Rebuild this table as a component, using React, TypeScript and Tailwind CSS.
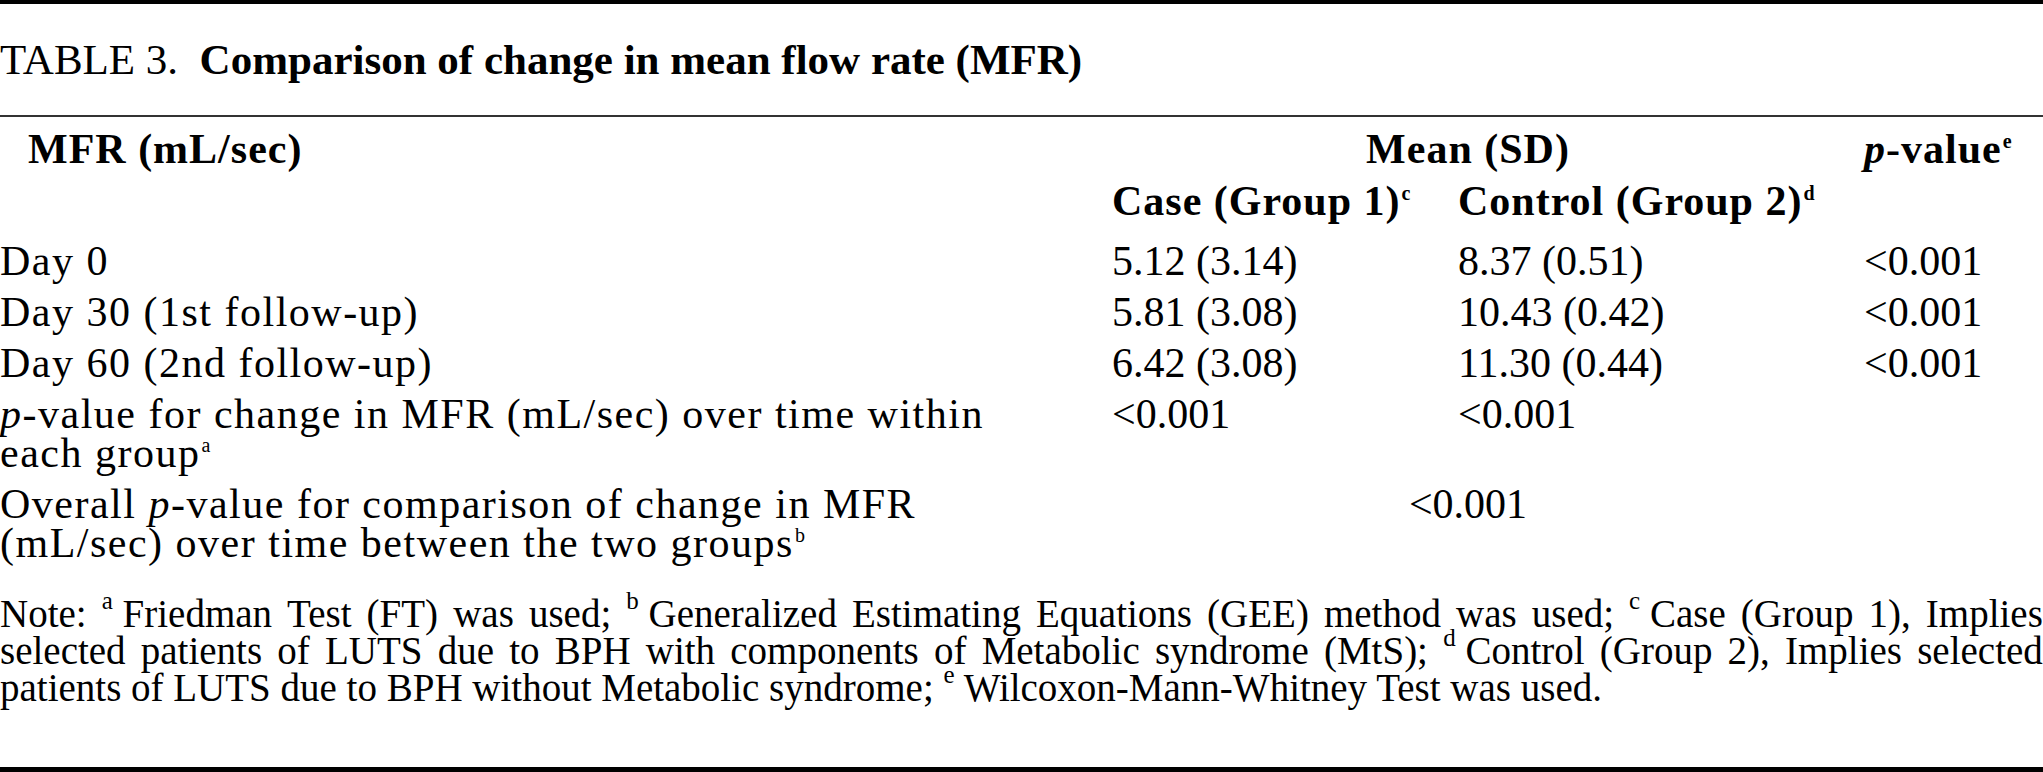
import React from "react"

type Cell = React.ReactNode

function Sup({ children }: { children: React.ReactNode }) {
  return <sup className="text-[20px] relative top-[-15px] align-baseline ml-[1px] tracking-normal">{children}</sup>
}

function NoteSup({ children }: { children: React.ReactNode }) {
  return <sup className="text-[25px] relative top-[-4px] align-super">{children}</sup>
}

function Row({ cells, className = "" }: { cells: Cell[]; className?: string }) {
  return (
    <div className={`grid grid-cols-[1112px_346px_406px_1fr] ${className}`}>
      {cells.map((c, i) => (
        <div key={i} className={i === 0 ? "tracking-[1.5px]" : ""}>
          {c}
        </div>
      ))}
    </div>
  )
}

const dataRows: Cell[][] = [
  ["Day 0", "5.12 (3.14)", "8.37 (0.51)", "<0.001"],
  ["Day 30 (1st follow-up)", "5.81 (3.08)", "10.43 (0.42)", "<0.001"],
  ["Day 60 (2nd follow-up)", "6.42 (3.08)", "11.30 (0.44)", "<0.001"],
]

export default function App() {
  return (
    <div className="w-[2043px] h-[772px] bg-white text-black font-['Liberation_Serif',serif] text-[42px] leading-[39px] flex flex-col overflow-hidden">
      <div className="h-[4px] bg-black" />

      {/* Caption */}
      <div className="pt-[36px] pb-[36px] text-[43px] whitespace-nowrap">
        TABLE 3.&nbsp; <span className="font-bold">Comparison of change in mean flow rate (MFR)</span>
      </div>
      <div className="h-[2px] bg-[#333]" />

      {/* Header */}
      <div className="pt-[13px] font-bold tracking-[1px]">
        <div className="grid grid-cols-[1112px_752px_1fr]">
          <div className="pl-[28px]">MFR (mL/sec)</div>
          <div className="text-center pr-[40px]">Mean (SD)</div>
          <div>
            <span className="italic">p</span>-value<Sup>e</Sup>
          </div>
        </div>
        <div className="grid grid-cols-[1112px_346px_406px_1fr] mt-[13px]">
          <div />
          <div>Case (Group 1)<Sup>c</Sup></div>
          <div>Control (Group 2)<Sup>d</Sup></div>
          <div />
        </div>
      </div>

      {/* Body */}
      <div className="mt-[21px] flex flex-col gap-[12px]">
        {dataRows.map((r, i) => (
          <Row key={i} cells={r} />
        ))}
        <Row
          cells={[
            <>
              <span className="italic">p</span>-value for change in MFR (mL/sec) over time within
              <br />
              each group<Sup>a</Sup>
            </>,
            "<0.001",
            "<0.001",
            "",
          ]}
        />
        <div className="grid grid-cols-[1112px_752px_1fr]">
          <div className="tracking-[1.5px]">
            Overall <span className="italic">p</span>-value for comparison of change in MFR
            <br />
            (mL/sec) over time between the two groups<Sup>b</Sup>
          </div>
          <div className="text-center pr-[40px]">&lt;0.001</div>
          <div />
        </div>
      </div>

      {/* Notes */}
      <div className="mt-[32px] text-[39px] leading-[37px]">
        <p className="flex justify-between whitespace-nowrap">
          <span>Note:</span>
          <span><NoteSup>a</NoteSup> Friedman</span>
          <span>Test</span>
          <span>(FT)</span>
          <span>was</span>
          <span>used;</span>
          <span><NoteSup>b</NoteSup> Generalized</span>
          <span>Estimating</span>
          <span>Equations</span>
          <span>(GEE)</span>
          <span>method</span>
          <span>was</span>
          <span>used;</span>
          <span><NoteSup>c</NoteSup> Case</span>
          <span>(Group</span>
          <span>1),</span>
          <span>Implies</span>
        </p>
        <p className="flex justify-between whitespace-nowrap">
          <span>selected</span>
          <span>patients</span>
          <span>of</span>
          <span>LUTS</span>
          <span>due</span>
          <span>to</span>
          <span>BPH</span>
          <span>with</span>
          <span>components</span>
          <span>of</span>
          <span>Metabolic</span>
          <span>syndrome</span>
          <span>(MtS);</span>
          <span><NoteSup>d</NoteSup> Control</span>
          <span>(Group</span>
          <span>2),</span>
          <span>Implies</span>
          <span>selected</span>
        </p>
        <p className="whitespace-nowrap">
          patients of LUTS due to BPH without Metabolic syndrome; <NoteSup>e</NoteSup> Wilcoxon-Mann-Whitney Test was used.
        </p>
      </div>

      <div className="mt-auto h-[5px] bg-black" />
    </div>
  )
}
